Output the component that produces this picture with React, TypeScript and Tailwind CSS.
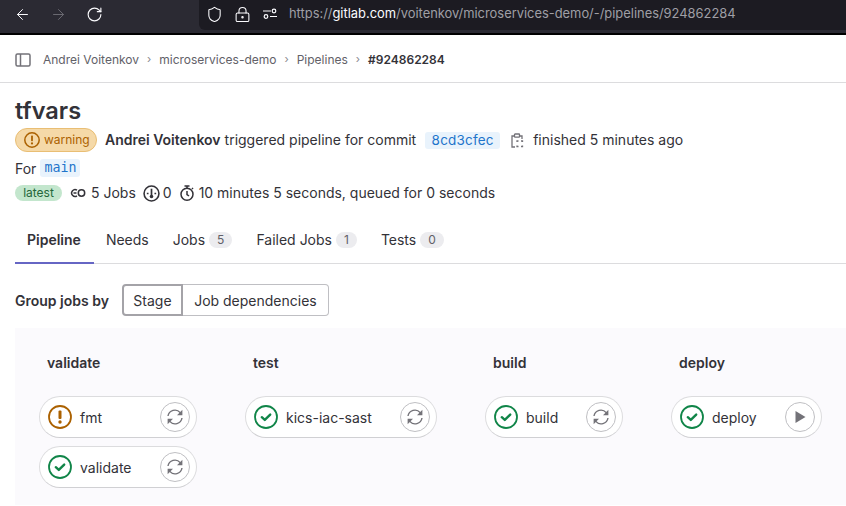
import { ArrowLeft, ArrowRight, RotateCw, Shield, LockKeyhole } from "lucide-react";

const inter = { fontFamily: "Inter, sans-serif" };

function RetryIcon() {
    return (
        <svg width="18" height="18" viewBox="0 0 18 18" fill="none" stroke="#737278" strokeWidth="1.4">
            <path d="M2 8a7 7 0 0 1 12.2-3.4L15.6 6" />
            <path d="M16.4 1.8v5.4H11z" fill="#737278" stroke="none" />
            <path d="M16 10a7 7 0 0 1-12.2 3.4L2.4 12" />
            <path d="M1.6 16.2v-5.4H7z" fill="#737278" stroke="none" />
        </svg>
    );
}

function StatusIcon({ status }: { status: "success" | "warning" }) {
    if (status === "warning") {
        return (
            <svg width="24" height="24" viewBox="0 0 24 24" fill="none" className="shrink-0">
                <circle cx="12" cy="12" r="11" stroke="#ab6100" strokeWidth="1.8" />
                <rect x="10.5" y="5.5" width="3" height="8.5" rx="1" fill="#ab6100" />
                <circle cx="12" cy="17" r="1.7" fill="#ab6100" />
            </svg>
        );
    }
    return (
        <svg width="24" height="24" viewBox="0 0 24 24" fill="none" className="shrink-0">
            <circle cx="12" cy="12" r="11" stroke="#108548" strokeWidth="1.8" />
            <path d="M7.8 12.2l3 2.7 5.4-5.3" stroke="#108548" strokeWidth="2.4" strokeLinecap="round" strokeLinejoin="round" />
        </svg>
    );
}

function Job({ name, status = "success", width, play }: { name: string; status?: "success" | "warning"; width: string; play?: boolean }) {
    return (
        <div className={`${width} h-[42px] flex items-center bg-white rounded-full border border-[#dcdcde] border-b-[#d0d0d3] pl-[8px] pr-[6px]`}>
            <StatusIcon status={status} />
            <span className="ml-2 text-[14px] text-[#333238]">{name}</span>
            <div className="ml-auto w-[30px] h-[30px] rounded-full border border-[#bfbfc3] flex items-center justify-center bg-white">
                {play ? (
                    <svg width="14" height="14" viewBox="0 0 14 14"><path d="M2.5 1l10 6-10 6z" fill="#737278" /></svg>
                ) : (
                    <RetryIcon />
                )}
            </div>
        </div>
    );
}

function Stage({ title, children }: { title: string; children: React.ReactNode }) {
    return (
        <div className="flex flex-col">
            <div className="pl-2 h-[36px] flex items-center text-[14px] font-semibold text-[#333238] mb-4">{title}</div>
            <div className="flex flex-col gap-2">{children}</div>
        </div>
    );
}

function Tab({ label, count, active }: { label: string; count?: number; active?: boolean }) {
    return (
        <div className={`h-[47px] flex items-center gap-1 pl-3 -mb-px border-b-2 text-[14px] text-[#333238] ${active ? "border-[#6666c4] font-semibold pr-[13px]" : "border-transparent pr-3"}`}>
            {label}
            {count !== undefined && (
                <span className="h-4 px-2 rounded-full bg-[#ececef] text-[12px] text-[#626168] flex items-center justify-center">{count}</span>
            )}
        </div>
    );
}

export default function App() {
    return (
        <div className="w-[846px] h-[506px] overflow-hidden bg-white text-[#333238]" style={inter}>
            {/* browser toolbar */}
            <div className="h-[35px] bg-[#2b2a33] border-b-2 border-black flex">
                <div className="w-[199px] flex items-center pl-[14px] gap-[19px] text-[#fbfbfe] pb-[4px]">
                    <ArrowLeft size={17} strokeWidth={1.4} />
                    <ArrowRight size={17} strokeWidth={1.4} className="text-[#6b6a72]" />
                    <RotateCw size={17} strokeWidth={1.6} />
                </div>
                <div className="flex-1 h-[30px] bg-[#1c1b22] rounded-bl-md flex items-center pl-[7px] pb-[2px] text-[#fbfbfe]">
                    <Shield size={17} strokeWidth={1.5} />
                    <LockKeyhole size={17} strokeWidth={1.5} className="ml-[11px]" />
                    <svg width="16" height="16" viewBox="0 0 16 16" fill="none" stroke="#fbfbfe" strokeWidth="1.2" className="ml-[11px]">
                        <path d="M1 5h8M8 10.5h7" />
                        <circle cx="12" cy="5" r="1.8" />
                        <circle cx="4" cy="10.5" r="1.8" />
                    </svg>
                    <span className="ml-[11px] text-[12.9px] text-[#9f9fa5]">
                        https://<span className="text-[#fbfbfe]">gitlab.com</span>/voitenkov/microservices-demo/-/pipelines/924862284
                    </span>
                </div>
            </div>

            {/* breadcrumbs */}
            <div className="h-[48px] pl-[15px] pt-[2px] flex items-center border-b border-[#dcdcde] text-[12px] text-[#626168]">
                <svg width="16" height="16" viewBox="0 0 16 16" fill="none" stroke="#737278" strokeWidth="1.5">
                    <rect x="1" y="2" width="14" height="12" rx="1.5" />
                    <path d="M5.5 2v12" />
                </svg>
                <span className="ml-3">Andrei Voitenkov</span>
                <span className="mx-2 text-[11px] text-[#89888d]">›</span>
                <span>microservices-demo</span>
                <span className="mx-2 text-[11px] text-[#89888d]">›</span>
                <span>Pipelines</span>
                <span className="mx-2 text-[11px] text-[#89888d]">›</span>
                <span className="font-semibold text-[#333238]">#924862284</span>
            </div>

            {/* header */}
            <div className="pl-[15px]">
                <h1 className="text-[23.5px] leading-[30px] font-semibold mt-[13px]">tfvars</h1>
                <div className="flex items-center h-[24px] mt-[2px] text-[14px]">
                    <span className="h-6 w-[82px] rounded-full border border-[#e9be74] bg-[#f5d9a8] text-[#ab6100] flex items-center pl-2 gap-1 text-[12px]">
                        <svg width="16" height="16" viewBox="0 0 16 16" fill="none">
                            <circle cx="8" cy="8" r="7.2" stroke="#ab6100" strokeWidth="1.5" />
                            <rect x="7.1" y="3.6" width="1.8" height="5.6" rx=".7" fill="#ab6100" />
                            <circle cx="8" cy="11.4" r="1.1" fill="#ab6100" />
                        </svg>
                        warning
                    </span>
                    <span className="ml-2 pb-[2px] font-semibold">Andrei Voitenkov</span>
                    <span className="ml-1 pb-[2px]">triggered pipeline for commit</span>
                    <span className="ml-[9px] h-[17px] w-[75px] rounded-[3px] bg-[#e9f3fc] text-[#1f75cb] flex items-center justify-center text-[13.5px] tracking-[0.2px]">8cd3cfec</span>
                    <svg width="16" height="16" viewBox="0 0 16 16" fill="none" stroke="#737278" strokeWidth="1.3" className="ml-[9px] mt-[2px]">
                        <path d="M5 3H3v11h3M11 3h2v3" />
                        <rect x="5.5" y="1" width="5" height="3.2" rx=".6" />
                        <path d="M8 9V8h1.5M12 8h1.5v1M13.5 12.5v1H12M9.5 13.5H8v-1" />
                    </svg>
                    <span className="ml-2 pb-[2px]">finished 5 minutes ago</span>
                </div>
                <div className="flex items-center h-[20px] mt-[6px] text-[14px]">
                    For
                    <span className="ml-1 h-[18px] px-1 rounded-[3px] bg-[#e9f3fc] text-[#1f75cb] flex items-center text-[13.3px]" style={{ fontFamily: "'DejaVu Sans Mono', monospace" }}>main</span>
                </div>
                <div className="flex items-center h-[20px] mt-[5px] text-[14px]">
                    <span className="h-4 w-[47px] rounded-full bg-[#c3e6cd] text-[#24663b] flex items-center justify-center text-[12px]">latest</span>
                    <svg width="16" height="16" viewBox="0 0 16 16" fill="none" stroke="#333238" strokeWidth="1.5" className="ml-2">
                        <path d="M7 5.2A3.4 3.4 0 1 0 7 10.8" />
                        <path d="M3.5 8h3" />
                        <circle cx="11.5" cy="8" r="3.2" />
                    </svg>
                    <span className="ml-[5px] pb-[2px]">5 Jobs</span>
                    <svg width="17" height="17" viewBox="0 0 16 16" fill="none" className="ml-[7px]">
                        <circle cx="8" cy="8" r="7" stroke="#333238" strokeWidth="1.5" />
                        <path d="M8 3.5v6" stroke="#333238" strokeWidth="1.6" />
                        <circle cx="8" cy="10.8" r="1.7" fill="#333238" />
                        <path d="M3.6 8h1.6M10.8 8h1.6" stroke="#333238" strokeWidth="1.3" />
                    </svg>
                    <span className="ml-[3px] pb-[2px]">0</span>
                    <svg width="16" height="16" viewBox="0 0 16 16" fill="none" stroke="#333238" strokeWidth="1.5" className="ml-[7px]">
                        <circle cx="8" cy="9.2" r="6" />
                        <path d="M5.5 1h5M8 1v2M8 6v3.5l2 1.5M13 3l1 1" />
                    </svg>
                    <span className="ml-1 pb-[2px]">10 minutes 5 seconds, queued for 0 seconds</span>
                </div>

                {/* tabs */}
                <div className="flex border-b border-[#dcdcde] mt-[14px]">
                    <Tab label="Pipeline" active />
                    <Tab label="Needs" />
                    <Tab label="Jobs" count={5} />
                    <Tab label="Failed Jobs" count={1} />
                    <Tab label="Tests" count={0} />
                </div>

                {/* group by */}
                <div className="flex items-center h-[32px] mt-[20px] text-[14px]">
                    <span className="font-semibold">Group jobs by</span>
                    <div className="ml-[13px] flex h-[32px]">
                        <span className="w-[61px] flex items-center justify-center rounded-l-[4px] border-2 border-[#a4a3a8]">Stage</span>
                        <span className="w-[146px] flex items-center justify-center rounded-r-[4px] border border-l-0 border-[#bfbfc3]">Job dependencies</span>
                    </div>
                </div>
            </div>

            {/* pipeline graph */}
            <div className="ml-[15px] mt-[12px] h-[177px] bg-[#fbfafd] pl-6 pt-4 flex gap-12">
                <Stage title="validate">
                    <Job name="fmt" status="warning" width="w-[158px]" />
                    <Job name="validate" width="w-[158px]" />
                </Stage>
                <Stage title="test">
                    <Job name="kics-iac-sast" width="w-[192px]" />
                </Stage>
                <Stage title="build">
                    <Job name="build" width="w-[138px]" />
                </Stage>
                <Stage title="deploy">
                    <Job name="deploy" width="w-[151px]" play />
                </Stage>
            </div>
        </div>
    );
}
